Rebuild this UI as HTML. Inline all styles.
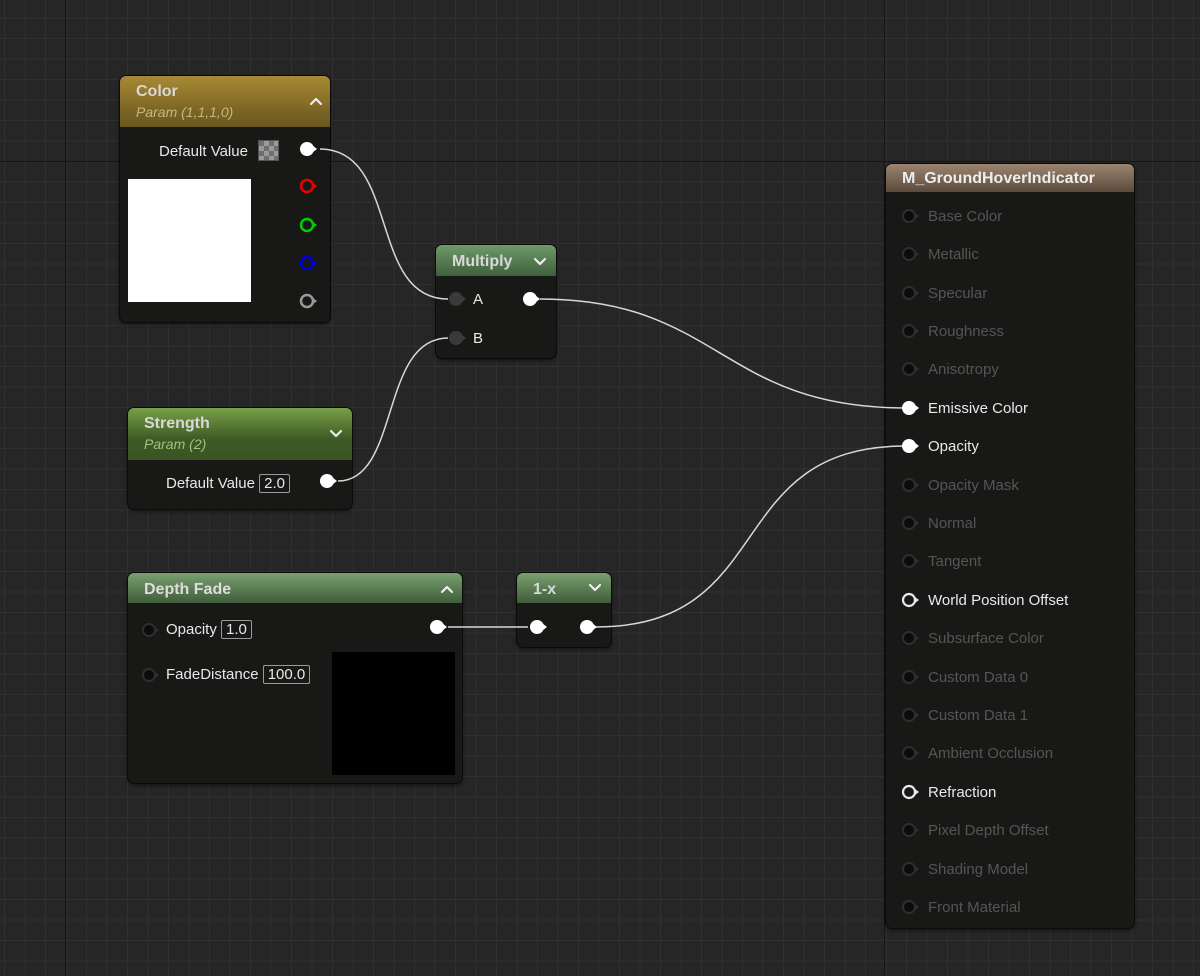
<!DOCTYPE html>
<html><head><meta charset="utf-8"><style>
*{margin:0;padding:0;box-sizing:border-box}
body{width:1200px;height:976px;overflow:hidden;background:#262626;font-family:"Liberation Sans",sans-serif;position:relative}
.grid{position:absolute;inset:0;
background-image:linear-gradient(90deg,#303030 1px,transparent 1px),linear-gradient(#303030 1px,transparent 1px);
background-size:20.5px 20.5px,20.5px 20.5px;background-position:4px 0px,0 -3px}
.vl{position:absolute;top:0;bottom:0;width:1px;background:#151515}
.hl{position:absolute;left:0;right:0;height:1px;background:#151515}
.node{position:absolute;background:#181917;border-radius:6px;box-shadow:0 0 0 1px #0a0a0a,0 2px 4px rgba(0,0,0,.6);overflow:hidden}
.hd{position:relative;color:#d8d8d8;font-weight:bold;font-size:16px;padding-left:16px}
.sub{font-style:italic;font-weight:normal;font-size:14px}
.t{position:absolute;color:#e8e8e8;font-size:15px;white-space:nowrap}
.d{color:#555}
.box{border:1.5px solid #9a9a9a;padding:0 4px;border-radius:2px}
svg.ov{position:absolute;left:0;top:0}
</style></head><body>
<div class="grid"></div>
<div class="vl" style="left:65px"></div><div class="vl" style="left:884px"></div>
<div class="hl" style="top:161px"></div>

<!-- Color -->
<div class="node" style="left:120px;top:76px;width:210px;height:246px">
 <div class="hd" style="height:51px;background:linear-gradient(180deg,#a88a35,#7a6424 70%,#6a5820);padding-top:7px">Color<div class="sub" style="color:#c8b680;margin-top:3px">Param (1,1,1,0)</div></div>
 <div style="position:absolute;left:8px;top:103px;width:123px;height:123px;background:#fff"></div>
 <div style="position:absolute;left:138px;top:64px;width:21px;height:21px;background:repeating-conic-gradient(#9a9a9a 0 25%,#6e6e6e 0 50%) 0 0/10px 10px;border:1px solid #555"></div>
</div>
<div class="t" style="left:159px;top:143px">Default Value</div>

<!-- Multiply -->
<div class="node" style="left:436px;top:245px;width:120px;height:113px">
 <div class="hd" style="height:31px;background:linear-gradient(180deg,#6f9a6a,#3f5f3c);padding-top:8px">Multiply</div>
</div>
<div class="t" style="left:473px;top:291px">A</div>
<div class="t" style="left:473px;top:330px">B</div>

<!-- Strength -->
<div class="node" style="left:128px;top:408px;width:224px;height:101px">
 <div class="hd" style="height:52px;background:linear-gradient(180deg,#78a048,#3d5a25 60%,#3a5524);padding-top:7px">Strength<div class="sub" style="color:#a5c080;margin-top:3px">Param (2)</div></div>
</div>
<div class="t" style="left:166px;top:475px">Default Value <span class="box">2.0</span></div>

<!-- Depth Fade -->
<div class="node" style="left:128px;top:573px;width:334px;height:210px">
 <div class="hd" style="height:30px;background:linear-gradient(180deg,#7aa070,#3f5c3a);padding-top:8px;color:#ddd">Depth Fade</div>
 <div style="position:absolute;left:204px;top:79px;width:123px;height:123px;background:#000"></div>
</div>
<div class="t" style="left:166px;top:621px">Opacity <span class="box">1.0</span></div>
<div class="t" style="left:166px;top:666px">FadeDistance <span class="box">100.0</span></div>

<!-- 1-x -->
<div class="node" style="left:517px;top:573px;width:94px;height:74px">
 <div class="hd" style="height:30px;background:linear-gradient(180deg,#7aa070,#3f5c3a);padding-top:8px">1-x</div>
</div>

<!-- Result -->
<div class="node" style="left:886px;top:164px;width:248px;height:764px;background:#181917">
 <div class="hd" style="height:28px;background:linear-gradient(180deg,#9b8470,#5b4a3c);padding-top:6px;color:#eee">M_GroundHoverIndicator</div>
</div>
<div class="t d" style="left:928px;top:208px">Base Color</div>
<div class="t d" style="left:928px;top:246px">Metallic</div>
<div class="t d" style="left:928px;top:285px">Specular</div>
<div class="t d" style="left:928px;top:323px">Roughness</div>
<div class="t d" style="left:928px;top:361px">Anisotropy</div>
<div class="t" style="left:928px;top:400px">Emissive Color</div>
<div class="t" style="left:928px;top:438px">Opacity</div>
<div class="t d" style="left:928px;top:477px">Opacity Mask</div>
<div class="t d" style="left:928px;top:515px">Normal</div>
<div class="t d" style="left:928px;top:553px">Tangent</div>
<div class="t" style="left:928px;top:592px">World Position Offset</div>
<div class="t d" style="left:928px;top:630px">Subsurface Color</div>
<div class="t d" style="left:928px;top:669px">Custom Data 0</div>
<div class="t d" style="left:928px;top:707px">Custom Data 1</div>
<div class="t d" style="left:928px;top:745px">Ambient Occlusion</div>
<div class="t" style="left:928px;top:784px">Refraction</div>
<div class="t d" style="left:928px;top:822px">Pixel Depth Offset</div>
<div class="t d" style="left:928px;top:861px">Shading Model</div>
<div class="t d" style="left:928px;top:899px">Front Material</div>

<svg class="ov" width="1200" height="976" viewBox="0 0 1200 976">
<defs>
<g id="pf"><circle r="7" fill="#fff"/><path d="M5.5-3.5L10 0 5.5 3.5z" fill="#fff"/></g>
<g id="pd"><circle r="7" fill="#3a3a3a"/><path d="M5.5-3.5L10 0 5.5 3.5z" fill="#3a3a3a"/></g>
<g id="pk"><circle r="6" fill="#0c0c0c" stroke="#2e2e2e" stroke-width="2"/><path d="M6.5-3L10 0 6.5 3z" fill="#2e2e2e"/></g>
</defs>
<g fill="none" stroke="#eee" stroke-width="2.2" stroke-linecap="round" stroke-linejoin="round">
<path d="M311 104L316 99 321 104"/>
<path d="M535 259L540 264 545 259"/>
<path d="M331 431L336 436 341 431"/>
<path d="M442 592L447 587 452 592"/>
<path d="M590 585L595 590 600 585"/>
</g>
<g fill="none" stroke="#d8d8d8" stroke-width="1.5">
<path d="M320 149C400 149 368 299 448 299"/>
<path d="M540 299C720 299 720 408 906 408"/>
<path d="M338 481C400 481 380 338 448 338"/>
<path d="M448 627L528 627"/>
<path d="M595 627C780 627 720 446 906 446"/>
</g>
<use href="#pf" x="307" y="149"/>
<g fill="none" stroke-width="2.5">
<circle cx="307" cy="186" r="6" stroke="#e00"/><circle cx="307" cy="225" r="6" stroke="#0c0"/>
<circle cx="307" cy="263" r="6" stroke="#00d"/><circle cx="307" cy="301" r="6" stroke="#999"/>
</g>
<path d="M313 183L317 186 313 189z" fill="#e00"/>
<path d="M313 222L317 225 313 228z" fill="#0c0"/><path d="M313 260L317 263 313 266z" fill="#00d"/><path d="M313 298L317 301 313 304z" fill="#999"/>
<use href="#pd" x="456" y="299"/><use href="#pd" x="456" y="338"/><use href="#pf" x="530" y="299"/>
<use href="#pf" x="327" y="481"/>
<use href="#pk" x="149" y="630"/><use href="#pk" x="149" y="675"/><use href="#pf" x="437" y="627"/>
<use href="#pf" x="537" y="627"/><use href="#pf" x="587" y="627"/>
<g>
<use href="#pk" x="909" y="216"/><use href="#pk" x="909" y="254"/><use href="#pk" x="909" y="293"/><use href="#pk" x="909" y="331"/><use href="#pk" x="909" y="369"/>
<use href="#pf" x="909" y="408"/><use href="#pf" x="909" y="446"/>
<use href="#pk" x="909" y="485"/><use href="#pk" x="909" y="523"/><use href="#pk" x="909" y="561"/>
<use href="#pk" x="909" y="638"/><use href="#pk" x="909" y="677"/><use href="#pk" x="909" y="715"/><use href="#pk" x="909" y="753"/>
<use href="#pk" x="909" y="830"/><use href="#pk" x="909" y="869"/><use href="#pk" x="909" y="907"/>
</g>
<g fill="none" stroke="#e8e8e8" stroke-width="2.2"><circle cx="909" cy="600" r="6"/><circle cx="909" cy="792" r="6"/></g>
<path d="M915 597L919 600 915 603zM915 789L919 792 915 795z" fill="#e8e8e8"/>
</svg>
</body></html>
